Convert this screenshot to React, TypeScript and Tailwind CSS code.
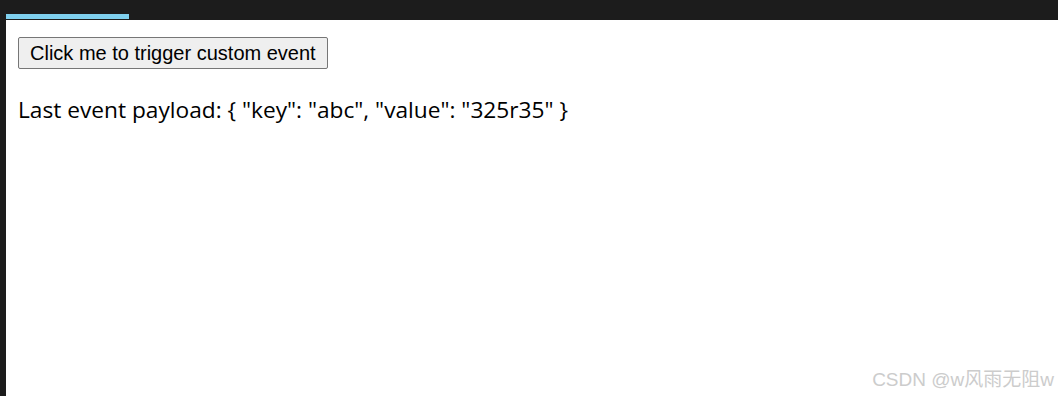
import React from "react";

export default function App() {
  return (
    <div className="w-[1058px] h-[396px] flex flex-col bg-white overflow-hidden">
      <div className="h-[20px] bg-[#1c1c1c] flex items-end shrink-0">
        <div className="ml-[6px] w-[123px] h-[5px] bg-[#7fd0ee] mb-[1px]" />
      </div>
      <div className="flex flex-1 min-h-0">
        <div className="w-[6px] bg-[#1c1c1c] shrink-0" />
        <div className="flex-1 relative flex flex-col items-start pl-[12px] pt-[17px]">
          <button className="h-[32px] px-[11px] border border-[#767676] rounded-[2px] bg-[#efefef] text-[20px] text-black leading-none [font-family:'Liberation_Sans',Arial,sans-serif]">
            Click me to trigger custom event
          </button>
          <p className="mt-[30px] text-[22.7px] text-black leading-none [font-family:'Open_Sans','Noto_Sans',sans-serif]">
            Last event payload: {'{ "key": "abc", "value": "325r35" }'}
          </p>
          <div className="absolute right-[4px] bottom-[7px] text-[19px] text-[#cccccc] leading-none [font-family:'Liberation_Sans','Noto_Sans_CJK_SC',sans-serif]">
            CSDN @w风雨无阻w
          </div>
        </div>
      </div>
    </div>
  );
}
